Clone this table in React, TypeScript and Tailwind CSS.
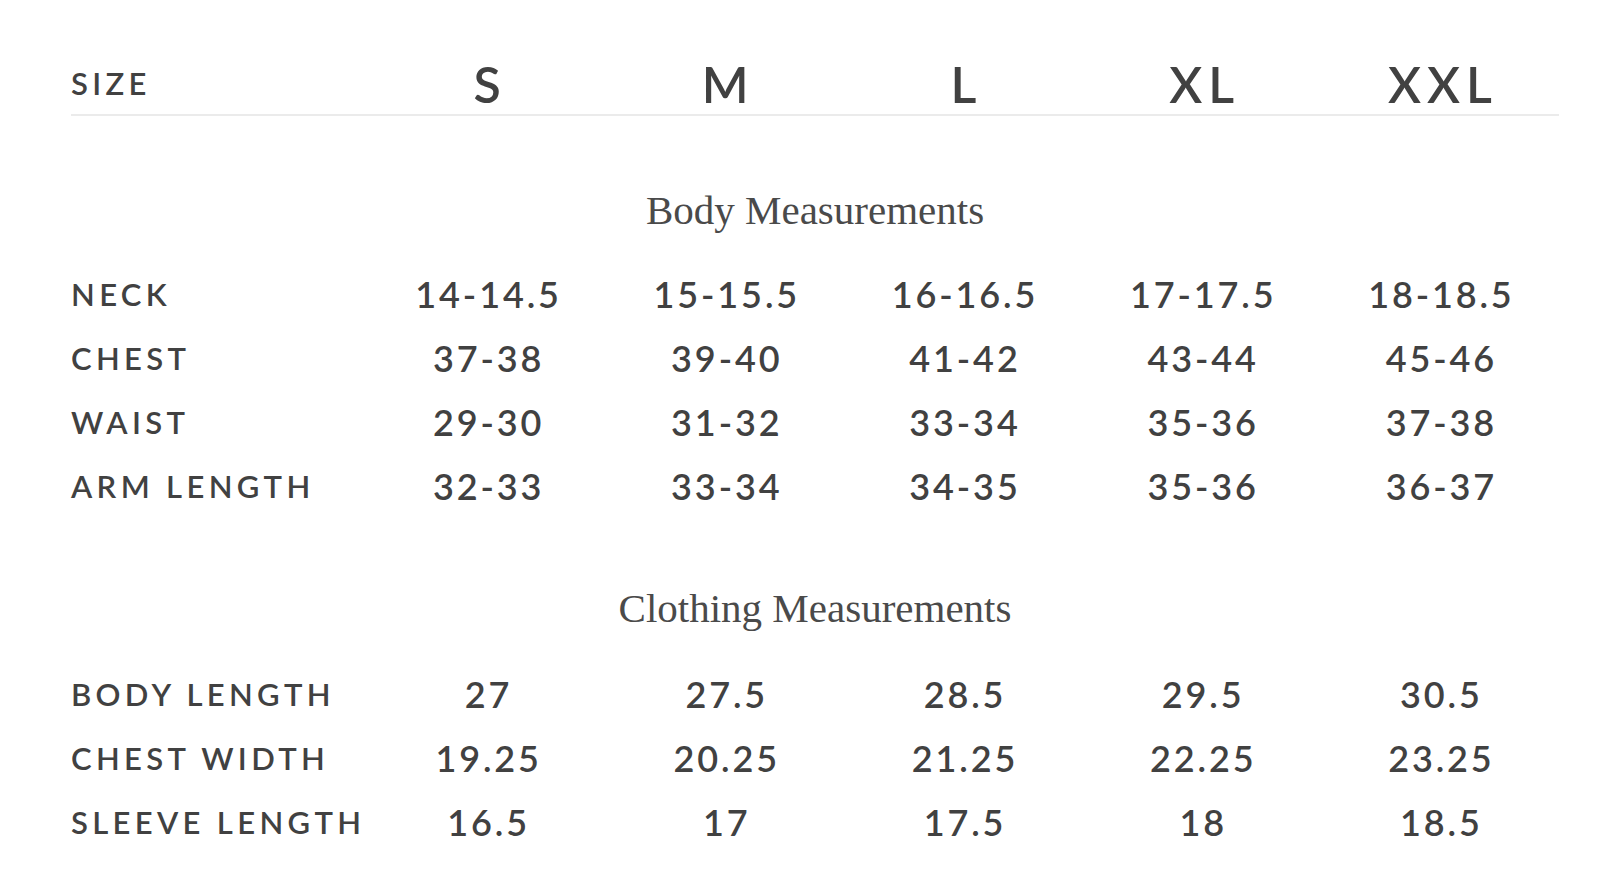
const sizes = ["S", "M", "L", "XL", "XXL"];

const body: [string, string[]][] = [
  ["Neck", ["14-14.5", "15-15.5", "16-16.5", "17-17.5", "18-18.5"]],
  ["Chest", ["37-38", "39-40", "41-42", "43-44", "45-46"]],
  ["Waist", ["29-30", "31-32", "33-34", "35-36", "37-38"]],
  ["Arm Length", ["32-33", "33-34", "34-35", "35-36", "36-37"]],
];

const clothing: [string, string[]][] = [
  ["Body Length", ["27", "27.5", "28.5", "29.5", "30.5"]],
  ["Chest Width", ["19.25", "20.25", "21.25", "22.25", "23.25"]],
  ["Sleeve Length", ["16.5", "17", "17.5", "18", "18.5"]],
];

function Rows({ rows }: { rows: [string, string[]][] }) {
  return (
    <div>
      {rows.map(([label, values]) => (
        <div key={label} className="grid grid-cols-[297px_repeat(5,1fr)] items-center h-[64px]">
          <div className="whitespace-nowrap text-[31px] leading-none uppercase tracking-[0.14em] font-semibold">
            {label}
          </div>
          {values.map((v, i) => (
            <div key={i} className="pl-[3px] text-center text-[36px] leading-none tracking-[0.08em] font-semibold">
              {v}
            </div>
          ))}
        </div>
      ))}
    </div>
  );
}

function Heading({ children }: { children: string }) {
  return (
    <h2 className="h-[40px] text-center text-[41px] leading-none text-[#4a4a4a] font-['Liberation_Serif',serif]">
      {children}
    </h2>
  );
}

export default function App() {
  return (
    <div className="min-h-screen w-full bg-white text-[#414141] font-['Lato',sans-serif]">
      <div className="ml-[71px] w-[1488px] pt-[53px]">
        {/* header */}
        <div className="grid grid-cols-[297px_repeat(5,1fr)] items-center h-[63px] border-b-2 border-[#ebebeb]">
          <div className="text-[31px] leading-none tracking-[0.14em] font-semibold">SIZE</div>
          {sizes.map((s) => (
            <div key={s} className="pl-[6px] text-center text-[50px] leading-none tracking-[0.12em] font-semibold">
              {s}
            </div>
          ))}
        </div>

        <div className="mt-[74px]">
          <Heading>Body Measurements</Heading>
        </div>
        <div className="mt-[32px]">
          <Rows rows={body} />
        </div>

        <div className="mt-[70px]">
          <Heading>Clothing Measurements</Heading>
        </div>
        <div className="mt-[34px]">
          <Rows rows={clothing} />
        </div>
      </div>
    </div>
  );
}
